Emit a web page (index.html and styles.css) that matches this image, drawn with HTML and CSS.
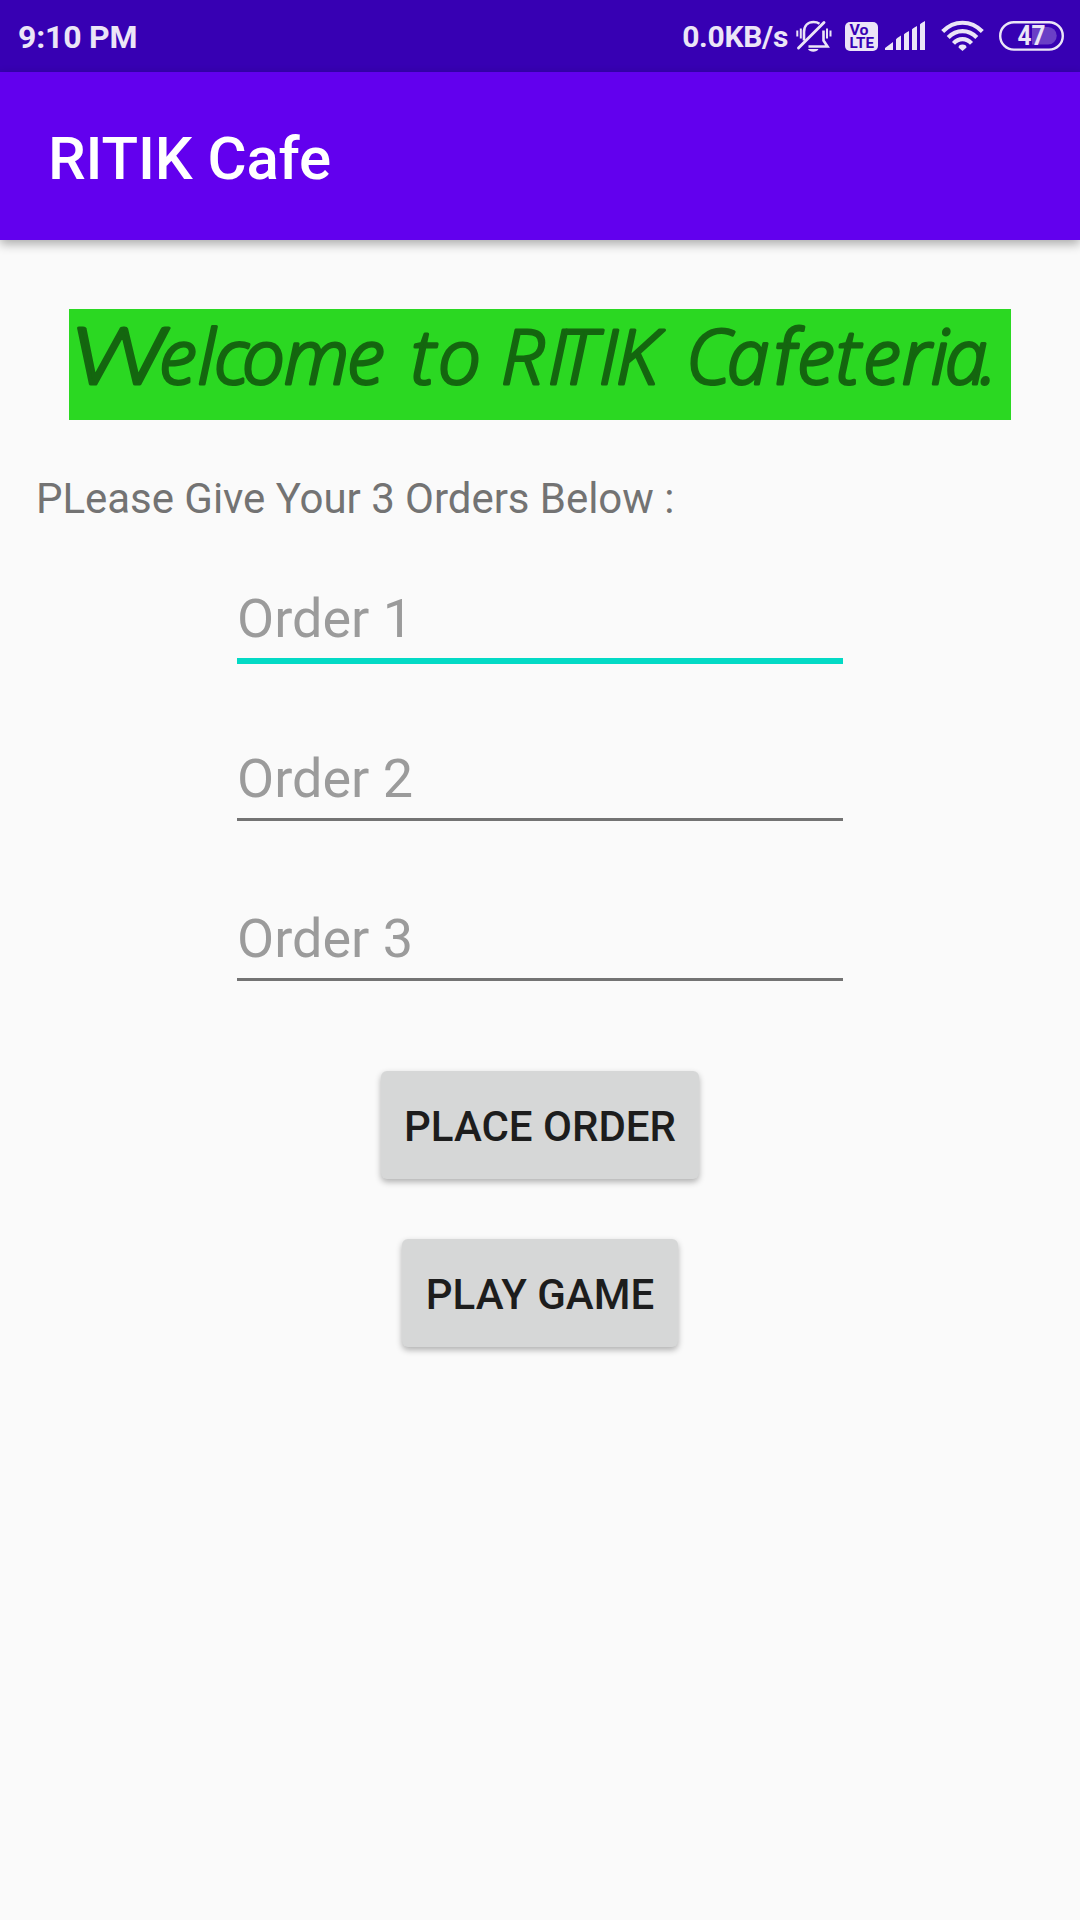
FILE: index.html
```html
<!DOCTYPE html>
<html lang="en">
<head>
<meta charset="utf-8">
<title>RITIK Cafe</title>
<link rel="stylesheet" href="styles.css">
</head>
<body>
<div class="status-bar">
  <span class="clock">9:10 PM</span>
  <div class="indicators">
    <span class="net-speed">0.0KB/s</span>
    <svg class="icon-bell" width="36" height="34" viewBox="0 0 36 34" fill="none" stroke="currentColor" stroke-width="2.6">
      <path d="M8 20.500V12C8 5.500 12 2 17.500 2C20 2 21.800 2.500 23.500 3.700M27.500 10.500V20.500L31.500 26.500H12.500"/>
      <path d="M2.500 28L28 2.500" stroke-width="2.900" stroke-linecap="round"/>
      <path d="M1.300 10.500V16.500M4.800 8.500V18.500M31 8.500V18.500M34.500 10.500V16.500" stroke-width="2"/>
      <path d="M12 29H22.500C21 32.600 13.500 32.600 12 29Z" fill="currentColor" stroke="none"/>
    </svg>
    <svg class="icon-volte" width="33" height="29" viewBox="0 0 33 29">
      <rect width="33" height="29" rx="5" fill="currentColor"/>
      <g class="volte-text">
        <text x="4.500" y="12.800" textLength="19" lengthAdjust="spacingAndGlyphs">Vo</text>
        <text x="4.500" y="25.500" textLength="24.500" lengthAdjust="spacingAndGlyphs">LTE</text>
      </g>
    </svg>
    <svg class="icon-signal" width="41" height="30" viewBox="0 0 41 30" fill="currentColor">
      <path d="M0 29V27L8 21V29ZM11 18.500Q11 17.500 16 14.500V29H11ZM19 13.500Q19 12.500 24 10V29H19ZM27 8.500Q27 7.500 32 5V29H27ZM35 3.500Q35 2.500 40 0V29H35Z"/>
    </svg>
    <svg class="icon-wifi" width="44" height="32" viewBox="0 0 44 32" fill="none" stroke="currentColor" stroke-width="4.100">
      <path d="M1.700 11.500C13 -0.200 30 -0.200 41.300 11.500M7.200 17.500C15.500 9 27.500 9 35.800 17.500M12.500 23.300C17.500 17.700 25.500 17.700 30.500 23.300"/>
      <path d="M17.500 27.500Q17.500 24.500 21.500 24.500T25.500 27.500L21.500 31Z" fill="currentColor" stroke="none"/>
    </svg>
    <svg class="icon-battery" width="65" height="30" viewBox="0 0 65 30">
      <rect x="1.200" y="1.200" width="62.600" height="27.400" rx="13.700" fill="none" stroke="currentColor" stroke-width="2.400"/>
      <path d="M33 6H49A8.700 8.700 0 0 1 49 23.500H33Z" class="battery-level"/>
      <text x="18.500" y="24" textLength="28" class="battery-text" lengthAdjust="spacingAndGlyphs">47</text>
    </svg>
  </div>
</div>
<header class="app-bar"><h1 class="app-title">RITIK Cafe</h1></header>
<main class="content">
  <svg class="banner" width="942" height="111" viewBox="0 0 942 111" role="heading" aria-level="2">
    <text y="75" x="3 90 129 145 173 215 278 300 342 369 400 432 479 490 530 547 584 617 658 704 728 767 794 833 862 876 911"><tspan class="wide" textLength="94" lengthAdjust="spacingAndGlyphs">W</tspan>elcome to RITIK Ca<tspan class="tall">f</tspan>eteria.</text>
  </svg>
  <p class="prompt">PLease Give Your 3 Orders Below :</p>
  <form class="order-form">
    <input class="field field-active" type="text" placeholder="Order 1">
    <input class="field" type="text" placeholder="Order 2">
    <input class="field" type="text" placeholder="Order 3">
    <button class="btn btn-order" type="button">PLACE ORDER</button>
    <button class="btn btn-game" type="button">PLAY GAME</button>
  </form>
</main>
</body>
</html>
```
FILE: styles.css
```css
* { box-sizing: border-box; }

body {
  margin: 0;
  min-height: 1920px;
  background: #fafafa;
  font-family: Roboto, "Liberation Sans", sans-serif;
}

.status-bar {
  display: flex;
  justify-content: space-between;
  height: 72px;
  padding: 0 16px 0 18px;
  background: #3700b3;
  color: #ebe5f7;
  font-weight: 700;
}

.clock {
  font-size: 32px;
  line-height: 74px;
  letter-spacing: -0.2px;
}

.indicators { display: flex; align-items: flex-start; }
.net-speed { font-size: 30px; line-height: 74px; letter-spacing: -0.3px; }
.icon-bell { margin: 20px 0 0 8px; }
.icon-volte { margin: 22px 0 0 13px; }
.icon-signal { margin: 21px 0 0 7px; }
.icon-wifi { margin: 20px 0 0 15px; }
.icon-battery { margin: 21px 0 0 14px; }

.volte-text {
  fill: #3700b3;
  font: 700 14px Roboto, sans-serif;
}

.battery-level { fill: #6a3fc6; }
.battery-text { fill: currentColor; font: 700 27px Roboto, sans-serif; }

.app-bar {
  display: flex;
  align-items: center;
  height: 168px;
  padding: 5px 48px 0;
  background: #6200ee;
  box-shadow: 0 4px 10px rgba(0, 0, 0, 0.32);
}

.app-title {
  margin: 0;
  color: #fff;
  font-size: 60px;
  font-weight: 500;
  letter-spacing: -0.15px;
}

.content {
  display: flex;
  flex-direction: column;
  padding-top: 69px;
}

.banner {
  align-self: center;
  overflow: visible;
  background: #2bd822;
}

.banner text {
  fill: #14660f;
  stroke: #14660f;
  stroke-width: 3.2px;
  stroke-linejoin: round;
  font: italic 300 76px "Open Sans", "Noto Sans", sans-serif;
}

.banner .wide { font-family: Lato, sans-serif; font-size: 78px; }
.banner .tall { font-family: Roboto, sans-serif; }

.prompt {
  margin: 49px 36px 0;
  color: #737373;
  font-size: 42px;
  line-height: 60px;
  letter-spacing: -0.04px;
}

.order-form {
  display: flex;
  flex-direction: column;
  align-items: center;
  padding-top: 49px;
}

.field {
  width: 606px;
  height: 83px;
  margin-bottom: 77px;
  padding: 1px 0 0;
  border: 0;
  border-bottom: 3px solid #737373;
  outline: 0;
  background: none;
  font: 54px Roboto, sans-serif;
}

.field-active {
  height: 86px;
  margin-bottom: 74px;
  border-bottom: 6px solid #03dac5;
}

.field::placeholder { color: #9b9b9b; opacity: 1; }

.btn {
  height: 108px;
  padding: 3px 0 0;
  border: 0;
  border-radius: 6px;
  background: #d6d7d7;
  box-shadow: 0 3px 6px rgba(0, 0, 0, 0.3);
  color: #1d1d1d;
  font: 500 42px Roboto, sans-serif;
}

.btn-order { width: 318px; margin-top: 13px; }
.btn-game { width: 276px; margin-top: 60px; }
```
